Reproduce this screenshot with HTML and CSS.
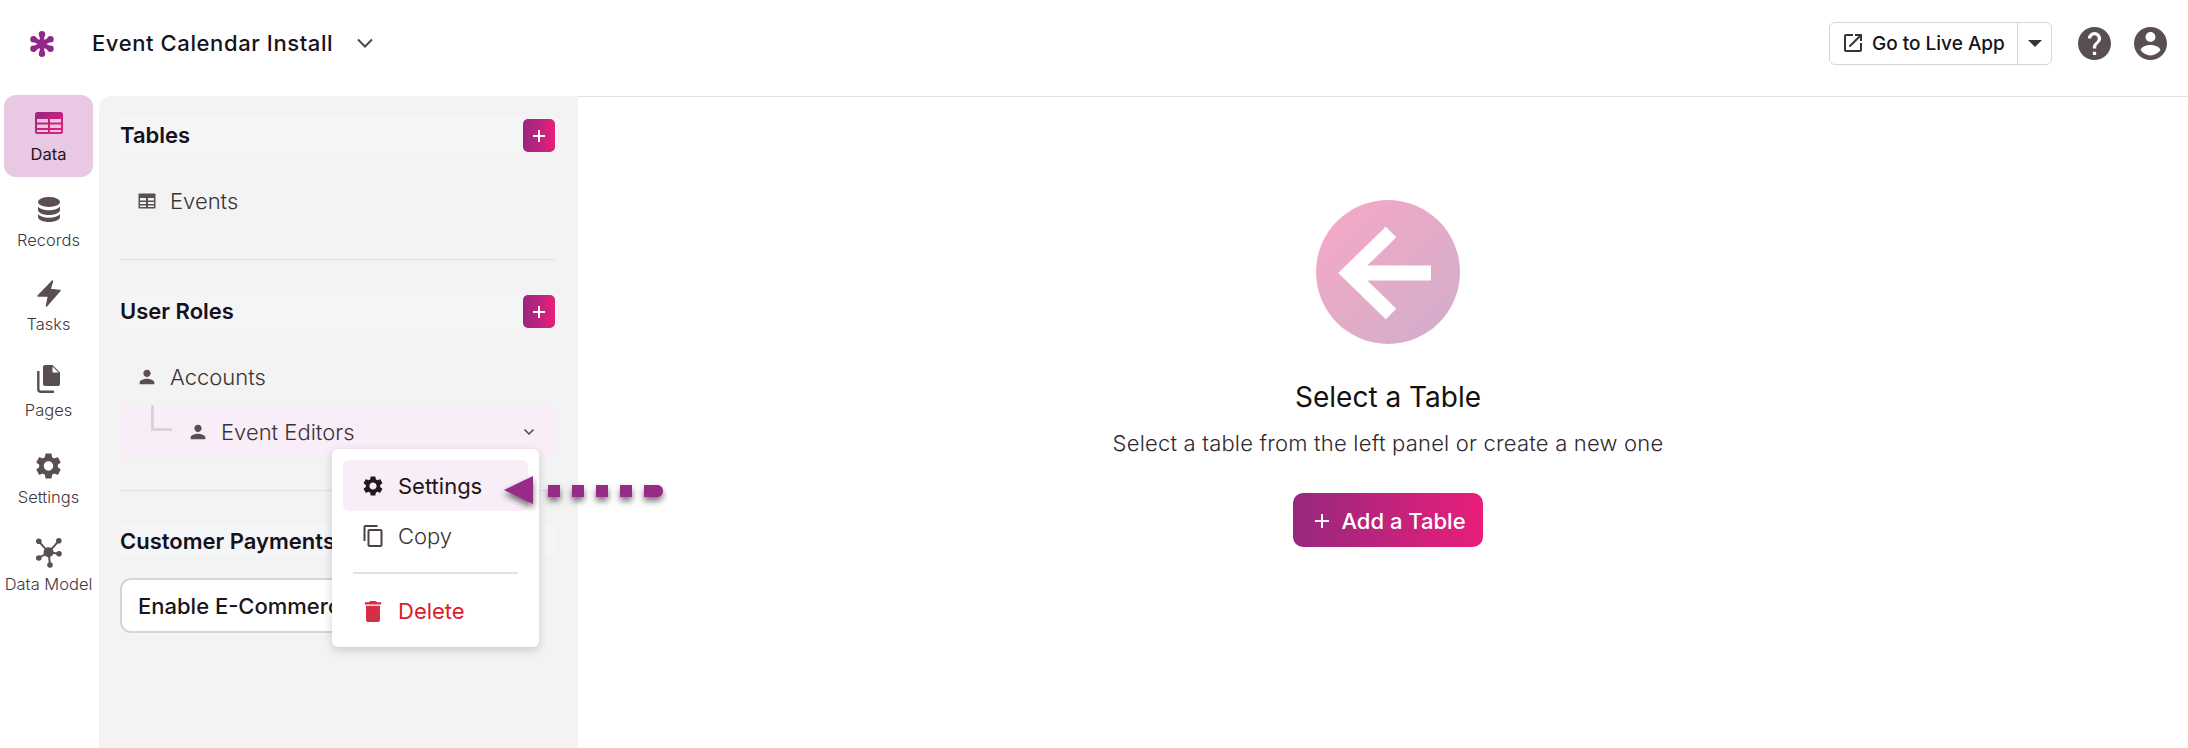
FILE: index.html
```html
<!DOCTYPE html>
<html lang="en">
<head>
<meta charset="utf-8">
<title>Event Calendar Install</title>
<link rel="stylesheet" href="styles.css">
</head>
<body>
<div class="app">
  <header class="topbar">
    <svg class="logo" viewBox="0 0 24 26" aria-hidden="true">
      <g stroke="#92278a" stroke-width="4.500" stroke-linecap="round">
        <path d="M12 13V3.500M12 13v9.500M12 13L3.800 8.250M12 13l8.200-4.750M12 13l-8.200 4.750M12 13l8.200 4.750"/>
      </g>
      <g fill="#92278a">
        <circle cx="12" cy="3.300" r="3.200"/><circle cx="12" cy="22.700" r="3.200"/><circle cx="3.500" cy="8.200" r="3.200"/><circle cx="20.500" cy="8.200" r="3.200"/><circle cx="3.500" cy="17.800" r="3.200"/><circle cx="20.500" cy="17.800" r="3.200"/>
      </g>
    </svg>
    <span class="app-title">Event Calendar Install</span>
    <svg class="title-chevron" viewBox="0 0 16 10" aria-hidden="true"><path d="M1 1.500l7 7 7-7" fill="none" stroke="#4f454b" stroke-width="2"/></svg>
    <div class="topbar-right">
      <div class="live-btn">
        <a class="live-main">
          <svg class="live-icon" viewBox="3 3 18 18" aria-hidden="true"><path d="M19 19H5V5h7V3H5c-1.110 0-2 .9-2 2v14c0 1.100.89 2 2 2h14c1.100 0 2-.9 2-2v-7h-2v7zM14 3v2h3.590l-9.830 9.830 1.410 1.410L19 6.410V10h2V3h-7z"/></svg>
          <span>Go to Live App</span>
        </a>
        <span class="live-caret"><i class="caret"></i></span>
      </div>
      <svg class="round-icon" viewBox="2 2 20 20" aria-hidden="true"><path d="M12 2C6.480 2 2 6.480 2 12s4.480 10 10 10 10-4.480 10-10S17.520 2 12 2zm1 17h-2v-2h2v2zm2.070-7.750l-.9.920C13.450 12.900 13 13.500 13 15h-2v-.5c0-1.100.45-2.100 1.170-2.830l1.240-1.260c.37-.36.59-.86.59-1.410 0-1.100-.9-2-2-2s-2 .9-2 2H8c0-2.210 1.790-4 4-4s4 1.790 4 4c0 .88-.36 1.680-.93 2.250z"/></svg>
      <svg class="round-icon" viewBox="2 2 20 20" aria-hidden="true"><path d="M12 2C6.480 2 2 6.480 2 12s4.480 10 10 10 10-4.480 10-10S17.520 2 12 2zm0 3c1.660 0 3 1.340 3 3s-1.340 3-3 3-3-1.340-3-3 1.340-3 3-3zm0 14.200c-2.500 0-4.710-1.280-6-3.220.03-1.990 4-3.080 6-3.080 1.990 0 5.970 1.090 6 3.080-1.290 1.940-3.500 3.220-6 3.220z"/></svg>
    </div>
  </header>

  <div class="workspace">
    <nav class="nav">
      <a class="nav-item active">
        <span class="nav-icon">
          <svg class="ic-data" viewBox="0 0 28 22" aria-hidden="true">
            <defs><linearGradient id="dataGrad" x1="0" y1="0" x2="1" y2="1"><stop offset="0" stop-color="#96287f"/><stop offset="1" stop-color="#e91e7a"/></linearGradient></defs>
            <rect width="28" height="22" rx="2.500" fill="url(#dataGrad)"/>
            <path d="M2 7h11v3.500H2zM15 7h11v3.500H15zM2 12.500h11V16H2zM15 12.500h11V16H15zM2 18h11v2H2zM15 18h11v2H15z" fill="#ecc6e0"/>
          </svg>
        </span>
        <span class="nav-label">Data</span>
      </a>
      <a class="nav-item">
        <span class="nav-icon">
          <svg class="ic-records" viewBox="0 0 22 25" aria-hidden="true">
            <ellipse cx="11" cy="5" rx="11" ry="5"/>
            <path d="M0 9.500c2 2.500 6.500 3.700 11 3.700s9-1.200 11-3.700v3.500c0 2.700-5 5-11 5S0 15.700 0 13zM0 17c2 2.500 6.500 3.700 11 3.700s9-1.200 11-3.700v3c0 2.700-5 5-11 5S0 22.700 0 20z"/>
          </svg>
        </span>
        <span class="nav-label">Records</span>
      </a>
      <a class="nav-item nudge-tasks">
        <span class="nav-icon">
          <svg class="ic-tasks" viewBox="0 0 24 27" aria-hidden="true"><path d="M15.500 1L13 9.500l10 1L9.500 26l2-10H1z" stroke-width="1.500" stroke-linejoin="round"/></svg>
        </span>
        <span class="nav-label">Tasks</span>
      </a>
      <a class="nav-item">
        <span class="nav-icon">
          <svg class="ic-pages" viewBox="0 0 23 28" aria-hidden="true">
            <path d="M8 0h7.500L23 7.500V19c0 1.100-.9 2-2 2H8c-1.100 0-2-.9-2-2V2c0-1.100.9-2 2-2z"/>
            <path d="M15.500 1.500v6h6z" fill="#fff"/>
            <path d="M1.300 6v18c0 1.500 1.200 2.700 2.700 2.700h13" fill="none" stroke-width="2.400"/>
          </svg>
        </span>
        <span class="nav-label">Pages</span>
      </a>
      <a class="nav-item nudge-one">
        <span class="nav-icon">
          <svg class="ic-settings" viewBox="2.500 2 19 20" aria-hidden="true"><path d="M19.140 12.940c.04-.3.06-.61.06-.94 0-.32-.02-.64-.07-.94l2.030-1.580c.18-.14.23-.41.12-.61l-1.920-3.320c-.12-.22-.37-.29-.59-.22l-2.390.96c-.5-.38-1.030-.7-1.620-.94l-.36-2.540c-.04-.24-.24-.41-.48-.41h-3.840c-.24 0-.43.17-.47.41l-.36 2.540c-.59.24-1.130.57-1.620.94l-2.390-.96c-.22-.08-.47 0-.59.22L2.740 8.870c-.12.21-.08.47.12.61l2.030 1.580c-.05.3-.09.63-.09.94s.02.64.07.94l-2.030 1.580c-.18.14-.23.41-.12.61l1.920 3.320c.12.22.37.29.59.22l2.390-.96c.5.38 1.030.7 1.620.94l.36 2.540c.05.24.24.41.48.41h3.840c.24 0 .44-.17.47-.41l.36-2.540c.59-.24 1.130-.56 1.620-.94l2.390.96c.22.08.47 0 .59-.22l1.920-3.320c.12-.22.07-.47-.12-.61l-2.010-1.580zM12 15.600c-1.980 0-3.600-1.620-3.600-3.600s1.620-3.600 3.600-3.600 3.600 1.620 3.600 3.600-1.620 3.600-3.600 3.600z"/></svg>
        </span>
        <span class="nav-label">Settings</span>
      </a>
      <a class="nav-item nudge-one">
        <span class="nav-icon">
          <svg class="ic-model" viewBox="0 0 26 30" aria-hidden="true">
            <path d="M12.600 14.300L2.800 3.300M12.600 14.300L22.800 2.800M12.600 14.300L2.500 20M12.600 14.300L22.800 15.800M12.600 14.300L14 27" fill="none" stroke-width="2"/>
            <circle cx="12.600" cy="14.300" r="5"/><circle cx="2.800" cy="3.300" r="2.800"/><circle cx="22.800" cy="2.800" r="2.800"/><circle cx="2.800" cy="20" r="2.800"/><circle cx="23" cy="15.800" r="2.800"/><circle cx="14" cy="27" r="2.800"/>
          </svg>
        </span>
        <span class="nav-label">Data Model</span>
      </a>
    </nav>

    <aside class="panel">
      <section class="sec-head">
        <h2>Tables</h2>
        <button class="add-btn" aria-label="Add table"><svg viewBox="0 0 14 14" aria-hidden="true"><path d="M7 1v12M1 7h12"/></svg></button>
      </section>
      <div class="tree-row row-events">
        <svg class="tree-icon" viewBox="0 0 22 22" aria-hidden="true"><path fill-rule="evenodd" d="M3.500 3.500h15c.6 0 1 .4 1 1v13c0 .6-.4 1-1 1h-15c-.6 0-1-.4-1-1v-13c0-.6.4-1 1-1zM4 8v2.500h6V8zm8 0v2.500h6V8zM4 12v2h6v-2zm8 0v2h6v-2zM4 15.500V17h6v-1.500zm8 0V17h6v-1.500z"/></svg>
        <span>Events</span>
      </div>
      <hr class="rule rule-tables">
      <section class="sec-head sec-roles">
        <h2>User Roles</h2>
        <button class="add-btn" aria-label="Add user role"><svg viewBox="0 0 14 14" aria-hidden="true"><path d="M7 1v12M1 7h12"/></svg></button>
      </section>
      <div class="tree-row row-accounts">
        <svg class="tree-icon" viewBox="0 0 24 24" aria-hidden="true"><path d="M12 12c2.210 0 4-1.790 4-4s-1.790-4-4-4-4 1.790-4 4 1.790 4 4 4zm0 2c-2.670 0-8 1.340-8 4v2h16v-2c0-2.660-5.330-4-8-4z"/></svg>
        <span>Accounts</span>
      </div>
      <div class="tree-row row-editors">
        <i class="tree-elbow"></i>
        <svg class="tree-icon" viewBox="0 0 24 24" aria-hidden="true"><path d="M12 12c2.210 0 4-1.790 4-4s-1.790-4-4-4-4 1.790-4 4 1.790 4 4 4zm0 2c-2.670 0-8 1.340-8 4v2h16v-2c0-2.660-5.330-4-8-4z"/></svg>
        <span>Event Editors</span>
        <svg class="row-chevron" viewBox="0 0 12 8" aria-hidden="true"><path d="M1.500 1.500L6 6l4.500-4.500" fill="none" stroke="#4f454b" stroke-width="1.500"/></svg>
      </div>
      <hr class="rule rule-roles">
      <section class="sec-head sec-payments">
        <h2>Customer Payments</h2>
      </section>
      <button class="commerce-btn">Enable E-Commerce</button>

      <div class="menu">
        <div class="menu-item current">
          <svg class="menu-icon" viewBox="2.500 2 19 20" aria-hidden="true"><path d="M19.140 12.940c.04-.3.06-.61.06-.94 0-.32-.02-.64-.07-.94l2.030-1.580c.18-.14.23-.41.12-.61l-1.920-3.320c-.12-.22-.37-.29-.59-.22l-2.390.96c-.5-.38-1.030-.7-1.620-.94l-.36-2.540c-.04-.24-.24-.41-.48-.41h-3.840c-.24 0-.43.17-.47.41l-.36 2.540c-.59.24-1.130.57-1.620.94l-2.390-.96c-.22-.08-.47 0-.59.22L2.740 8.870c-.12.21-.08.47.12.61l2.030 1.580c-.05.3-.09.63-.09.94s.02.64.07.94l-2.030 1.580c-.18.14-.23.41-.12.61l1.920 3.320c.12.22.37.29.59.22l2.390-.96c.5.38 1.030.7 1.620.94l.36 2.540c.05.24.24.41.48.41h3.840c.24 0 .44-.17.47-.41l.36-2.540c.59-.24 1.130-.56 1.620-.94l2.390.96c.22.08.47 0 .59-.22l1.920-3.320c.12-.22.07-.47-.12-.61l-2.010-1.580zM12 15.600c-1.980 0-3.600-1.620-3.600-3.600s1.620-3.600 3.600-3.600 3.600 1.620 3.600 3.600-1.620 3.600-3.600 3.600z"/></svg>
          <span>Settings</span>
        </div>
        <div class="menu-item copy">
          <svg class="menu-icon" viewBox="2 1 19 22" aria-hidden="true"><path d="M16 1H4c-1.100 0-2 .9-2 2v14h2V3h12V1zm3 4H8c-1.100 0-2 .9-2 2v14c0 1.100.9 2 2 2h11c1.100 0 2-.9 2-2V7c0-1.100-.9-2-2-2zm0 16H8V7h11v14z"/></svg>
          <span>Copy</span>
        </div>
        <hr class="menu-rule">
        <div class="menu-item danger">
          <svg class="menu-icon" viewBox="5 3 14 18" aria-hidden="true"><path d="M6 19c0 1.100.9 2 2 2h8c1.100 0 2-.9 2-2V7H6v12zM19 4h-3.500l-1-1h-5l-1 1H5v2h14V4z"/></svg>
          <span>Delete</span>
        </div>
      </div>
    </aside>

    <main class="main">
      <div class="hint-circle">
        <svg viewBox="0 0 144 144" aria-hidden="true"><path d="M115 73H32M75 32L33 73l42 41" fill="none" stroke="#fff" stroke-width="15"/></svg>
      </div>
      <h1>Select a Table</h1>
      <p>Select a table from the left panel or create a new one</p>
      <button class="primary-btn"><svg viewBox="0 0 16 16" aria-hidden="true"><path d="M8 1v14M1 8h14"/></svg><span>Add a Table</span></button>
    </main>
  </div>

  <svg class="pointer" viewBox="0 0 170 50" aria-hidden="true">
    <path d="M4 20L33 6v28z"/>
    <path d="M48 15h12v12H48zM72 15h12v12H72zM96 15h12v12H96zM120 15h12v12h-12zM144 15h13c3.500 0 6 2.500 6 6s-2.500 6-6 6h-13z"/>
  </svg>
</div>
</body>
</html>
```
FILE: styles.css
```css
* { box-sizing: border-box; }
html, body { margin: 0; height: 100%; }
body { background: #fff; font-family: Inter, "Liberation Sans", sans-serif; color: #1b1619; overflow: hidden; }
h1, h2, p { margin: 0; }
button { font-family: inherit; cursor: pointer; }
.app { position: relative; width: 2188px; height: 748px; overflow: hidden; }

.topbar { display: flex; align-items: center; height: 96px; padding: 0 21px 10px 30px; }
.logo { width: 24px; height: 26px; flex: none; margin-top: 2px; }
.app-title { margin-left: 38px; font-size: 22px; font-weight: 500; letter-spacing: .6px; color: #17131a; }
.title-chevron { width: 16px; height: 10px; margin-left: 24px; }
.topbar-right { display: flex; align-items: center; margin-left: auto; }
.live-btn { display: flex; width: 223px; height: 43px; border: 1.500px solid #d8d4d6; border-radius: 6px; background: #fff; margin-right: 26px; }
.live-main { display: flex; align-items: center; gap: 10px; width: 188px; flex: none; padding-left: 14px; border-right: 1.500px solid #d8d4d6; font-size: 19px; font-weight: 500; color: #17131a; white-space: nowrap; }
.live-icon { width: 18px; height: 18px; fill: #3a3237; flex: none; }
.live-caret { display: flex; align-items: center; justify-content: center; flex: 1; }
.caret { width: 0; height: 0; border-left: 7px solid transparent; border-right: 7px solid transparent; border-top: 7px solid #3a3237; }
.round-icon { width: 33px; height: 33px; fill: #594e54; flex: none; }
.round-icon + .round-icon { margin-left: 23px; }

.workspace { display: flex; height: 652px; }

.nav { display: flex; flex-direction: column; gap: 4px; width: 99px; flex: none; padding-left: 4px; margin-top: -1px; }
.nav-item { display: flex; flex-direction: column; align-items: center; gap: 6px; width: 89px; height: 82px; padding-top: 13px; border-radius: 12px; }
.nav-item.active { background: #e8c8e2; }
.nudge-tasks { margin-top: -2px; }
.nudge-one { margin-top: 1px; }
.nav-icon { display: flex; align-items: center; justify-content: center; height: 30px; }
.nav-icon svg { fill: #594e54; stroke: #594e54; stroke-width: 0; display: block; }
.nav-icon .ic-data { fill: none; }
.ic-data { width: 28px; height: 22px; }
.ic-records { width: 22px; height: 25px; }
.ic-tasks { width: 24px; height: 27px; }
.ic-pages { width: 23px; height: 28px; }
.ic-settings { width: 25px; height: 26px; }
.ic-model { width: 26px; height: 30px; }
.nav-label { font-size: 16.500px; line-height: 21px; font-weight: 300; color: #3f373c; white-space: nowrap; }
.active .nav-label { color: #1b1619; font-weight: 400; }

.panel { position: relative; width: 479px; flex: none; padding: 21px 23px 0 21px; background: #f3f3f4; border-top-left-radius: 12px; }
.sec-head { display: flex; align-items: flex-end; justify-content: space-between; height: 35px; background: #f4f5f7; }
.sec-head h2 { align-self: center; font-size: 22px; font-weight: 600; color: #14111a; white-space: nowrap; }
.add-btn { display: flex; align-items: center; justify-content: center; width: 32px; height: 33px; padding: 0; border: 0; border-radius: 5px; background: linear-gradient(90deg, #96287f, #e91e7a); }
.add-btn svg { width: 14px; height: 14px; fill: none; stroke: #fff; stroke-width: 2; }

.tree-row { display: flex; align-items: center; gap: 12px; height: 40px; padding-left: 16px; font-size: 22px; font-weight: 300; color: #3a3237; }
.tree-icon { width: 22px; height: 22px; flex: none; fill: #594e54; }
.row-events { margin-top: 29px; }
.rule { height: 1px; margin: 0; border: 0; background: #e2e0e2; }
.rule-tables { margin-top: 38px; }
.sec-roles { height: 34px; margin-top: 34px; }
.row-accounts { margin-top: 29px; }
.row-editors { position: relative; height: 53px; margin-top: 8px; padding: 0 20px 0 31px; background: #f9edf8; border-radius: 10px; }
.tree-elbow { align-self: flex-start; flex: none; width: 21px; height: 26px; border-left: 3px solid #d9d4d9; border-bottom: 3px solid #d9d4d9; margin-right: 3px; }
.row-chevron { width: 12px; height: 8px; margin-left: auto; }
.rule-roles { margin-top: 32px; }
.sec-payments { height: 33px; margin-top: 33px; }
.commerce-btn { display: block; width: 300px; height: 55px; margin-top: 21px; padding: 0 0 0 16px; text-align: left; border: 2px solid #d8d4d6; border-radius: 11px; background: #fff; font-size: 22px; font-weight: 500; color: #1b1619; white-space: nowrap; overflow: hidden; }

.menu { position: absolute; left: 233px; top: 353px; width: 207px; height: 198px; padding: 11px; background: #fff; border-radius: 6px; box-shadow: 0 3px 10px rgba(40, 30, 40, .2); }
.menu-item { display: flex; align-items: center; height: 51px; padding-left: 20px; gap: 15px; font-size: 22px; font-weight: 300; color: #3a3237; border-radius: 6px; }
.menu-item.current { background: #f9edf8; color: #1b1619; font-weight: 400; }
.menu-icon { width: 20px; height: 20px; flex: none; fill: #1f1a1e; }
.menu-item.copy { margin-top: -1px; }
.copy .menu-icon { fill: #4a4247; height: 22px; }
.menu-rule { height: 1.500px; margin: 11px 10px 0; border: 0; background: #e2e0e2; }
.menu-item.danger { margin-top: 12px; color: #dc1c2e; font-weight: 400; }
.danger .menu-icon { fill: #d42f45; height: 21px; }

.main { flex: 1; display: flex; flex-direction: column; align-items: center; padding: 103px 0 0 10px; border-top: 1.500px solid #e3e0e2; }
.hint-circle { width: 144px; height: 144px; border-radius: 50%; background: linear-gradient(135deg, #f7a8c6, #d0aecb); flex: none; }
.hint-circle svg { display: block; width: 144px; height: 144px; }
.main h1 { margin-top: 38px; font-size: 28px; line-height: 30px; font-weight: 400; color: #111; }
.main p { margin-top: 17px; font-size: 22px; line-height: 28px; font-weight: 300; letter-spacing: .2px; color: #2f282d; }
.primary-btn { display: flex; align-items: center; gap: 11px; height: 54px; margin-top: 36px; padding: 2px 17px 0 21px; border: 0; border-radius: 10px; background: linear-gradient(90deg, #96287f, #e91e7a); color: #fff; font-size: 22px; font-weight: 500; }
.primary-btn svg { width: 16px; height: 16px; fill: none; stroke: #fff; stroke-width: 2; flex: none; }

.pointer { position: absolute; left: 500px; top: 470px; width: 170px; height: 50px; fill: #982a88; filter: drop-shadow(0 4px 3px rgba(0, 0, 0, .55)); }
```
